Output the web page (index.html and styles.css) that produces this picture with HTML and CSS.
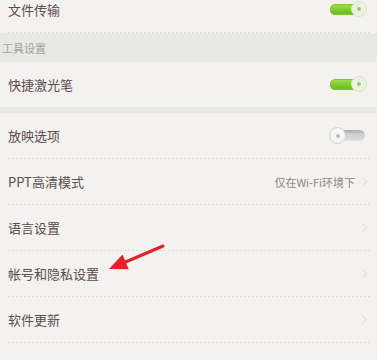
FILE: index.html
```html
<!DOCTYPE html>
<html lang="zh-CN">
<head>
<meta charset="utf-8">
<title>设置</title>
<link rel="stylesheet" href="styles.css">
</head>
<body>
<div class="list">
  <div class="row">
    <span class="label">文件传输</span>
    <span class="toggle on"><span class="knob"></span></span>
  </div>
  <div class="section">工具设置</div>
  <div class="row plain">
    <span class="label">快捷激光笔</span>
    <span class="toggle on"><span class="knob"></span></span>
  </div>
  <div class="gap"></div>
  <div class="row">
    <span class="label">放映选项</span>
    <span class="toggle off"><span class="knob"></span></span>
  </div>
  <div class="row">
    <span class="label">PPT高清模式</span>
    <span class="value">仅在Wi-Fi环境下</span>
    <svg class="chev" width="5" height="9" viewBox="0 0 5 9"><path d="M0.5 0.5 L4.3 4.5 L0.5 8.5" fill="none" stroke="#ddd7d1" stroke-width="1"/></svg>
  </div>
  <div class="row">
    <span class="label">语言设置</span>
    <svg class="chev" width="5" height="9" viewBox="0 0 5 9"><path d="M0.5 0.5 L4.3 4.5 L0.5 8.5" fill="none" stroke="#ddd7d1" stroke-width="1"/></svg>
  </div>
  <div class="row">
    <span class="label">帐号和隐私设置</span>
    <svg class="chev" width="5" height="9" viewBox="0 0 5 9"><path d="M0.5 0.5 L4.3 4.5 L0.5 8.5" fill="none" stroke="#ddd7d1" stroke-width="1"/></svg>
  </div>
  <div class="row">
    <span class="label">软件更新</span>
    <svg class="chev" width="5" height="9" viewBox="0 0 5 9"><path d="M0.5 0.5 L4.3 4.5 L0.5 8.5" fill="none" stroke="#ddd7d1" stroke-width="1"/></svg>
  </div>
  <div class="row">
    <span class="label">检查新版本</span>
  </div>
</div>
<svg class="arrow" width="377" height="360" viewBox="0 0 377 360">
  <line x1="163" y1="246" x2="122" y2="263.5" stroke="#e5222a" stroke-width="3" stroke-linecap="round"/>
  <polygon points="109,269 122.5,254.5 128.7,269.3" fill="#e5222a"/>
</svg>
</body>
</html>
```

FILE: styles.css
```css
html, body {
  margin: 0;
  padding: 0;
}
body {
  position: relative;
  width: 377px;
  height: 360px;
  overflow: hidden;
  background: #f3f2f0;
  font-family: "Noto Sans CJK SC", "Noto Sans", sans-serif;
  color: #5b4c4c;
}
.list {
  margin-top: -13px;
  display: flex;
  flex-direction: column;
}
.row {
  height: 45px;
  margin: 0 7px 0 8px;
  padding-bottom: 1px;
  display: flex;
  align-items: center;
  background: repeating-linear-gradient(to right, #e3dcd4 0 2px, transparent 2px 4px) left bottom / 100% 1px no-repeat;
}
.row.plain {
  background: none;
  padding-bottom: 0;
}
.label {
  flex: 1;
  font-size: 13px;
  line-height: 18px;
}
.section {
  height: 29px;
  background: #e8e8e7;
  display: flex;
  align-items: center;
  padding-left: 2px;
  font-size: 11px;
  color: #a79f99;
}
.gap {
  height: 6px;
  background: #e8e8e7;
}
.value {
  font-size: 11px;
  color: #8d8582;
  margin-right: 7px;
}
.chev {
  display: block;
  margin-right: 3px;
}
.toggle {
  position: relative;
  width: 37px;
  height: 17px;
  margin-right: 3px;
}
.toggle.on::before {
  content: "";
  position: absolute;
  left: 0;
  top: 3px;
  width: 30px;
  height: 11px;
  border-radius: 6px;
  background: linear-gradient(to bottom, #a8e05a, #72c524 70%, #6cbc20);
  box-shadow: inset 0 0 0 1px #7cc22e;
}
.toggle.on .knob {
  position: absolute;
  right: 0;
  top: 0;
  width: 14px;
  height: 14px;
  border-radius: 50%;
  background: #eeeeec;
  border: 1.5px solid #d3eeb0;
}
.toggle.on .knob::after {
  content: "";
  position: absolute;
  left: 5px;
  top: 5px;
  width: 4px;
  height: 4px;
  border-radius: 50%;
  background: #8fd540;
}
.toggle.off {
  width: 36px;
  margin-right: 5px;
}
.toggle.off::before {
  content: "";
  position: absolute;
  left: 8px;
  top: 3px;
  width: 28px;
  height: 11px;
  border-radius: 0 6px 6px 0;
  background: linear-gradient(to bottom, #a9a9a9, #cfcfcf 40%, #dedede);
}
.toggle.off .knob {
  position: absolute;
  left: 0;
  top: 0;
  width: 15px;
  height: 15px;
  border-radius: 50%;
  background: #f6f6f5;
  border: 1px solid #cfcfcf;
}
.toggle.off .knob::after {
  content: "";
  position: absolute;
  left: 5.5px;
  top: 5.5px;
  width: 4px;
  height: 4px;
  border-radius: 50%;
  background: #bdbdbd;
}
.arrow {
  position: absolute;
  left: 0;
  top: 0;
  pointer-events: none;
}
```
